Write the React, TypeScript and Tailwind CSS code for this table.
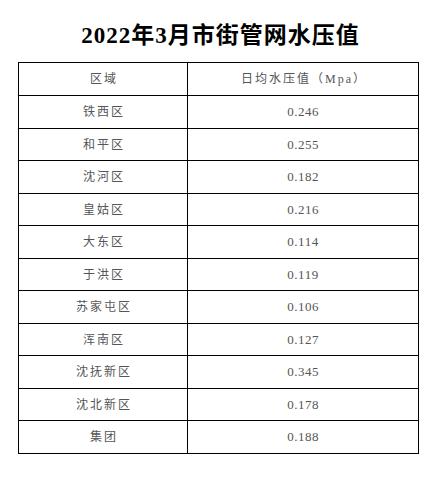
const rows: [string, string][] = [
  ['铁西区', '0.246'],
  ['和平区', '0.255'],
  ['沈河区', '0.182'],
  ['皇姑区', '0.216'],
  ['大东区', '0.114'],
  ['于洪区', '0.119'],
  ['苏家屯区', '0.106'],
  ['浑南区', '0.127'],
  ['沈抚新区', '0.345'],
  ['沈北新区', '0.178'],
  ['集团', '0.188'],
]

const cjk = { fontFamily: '"Liberation Serif", "Noto Sans CJK SC", serif' }

export default function App() {
  return (
    <div className="w-[441px] h-[477px] bg-white" style={cjk}>
      <div className="h-[62px] pt-[8px] flex items-center justify-center">
        <h1 className="text-[23px] leading-none font-bold tracking-[1px] text-black">
          2022年3月市街管网水压值
        </h1>
      </div>
      <table className="ml-[18px] w-[401px] border-collapse text-[#555]">
        <thead>
          <tr className="h-[33px]">
            <th className="w-[169px] border border-black font-normal text-[12px] tracking-[2px] pl-[2px]">
              区域
            </th>
            <th className="border border-black font-normal text-[12px] tracking-[2px] pl-[2px]">
              日均水压值（Mpa）
            </th>
          </tr>
        </thead>
        <tbody>
          {rows.map(([area, value], i) => (
            <tr key={area} className={i % 2 === 0 ? 'h-[33px]' : 'h-[32px]'}>
              <td className="border border-black text-center text-[12px] tracking-[2px] pl-[2px]">
                {area}
              </td>
              <td className="border border-black text-center text-[13px] tracking-[0.5px]">
                {value}
              </td>
            </tr>
          ))}
        </tbody>
      </table>
    </div>
  )
}
